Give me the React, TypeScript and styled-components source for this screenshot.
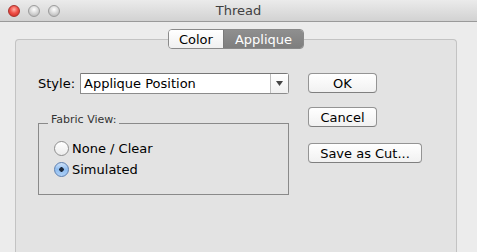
import styled, { createGlobalStyle } from "styled-components";

const GlobalStyle = createGlobalStyle`
  html, body {
    margin: 0;
    padding: 0;
    background: #ececec;
  }
  body {
    font-family: "DejaVu Sans", "Liberation Sans", sans-serif;
    font-size: 12px;
    color: #000;
  }
`;

export default function App() {
  return (
    <>
      <GlobalStyle />
      <Window>
        <TitleBar>
          <Lights>
            <Light $color="red" />
            <Light />
            <Light />
          </Lights>
          <Title>Thread</Title>
        </TitleBar>
        <Body>
          <Segmented>
            <Segment>Color</Segment>
            <Segment $active>Applique</Segment>
          </Segmented>
          <Panel>
            <LeftColumn>
              <FieldRow>
                <FieldLabel>Style:</FieldLabel>
                <Select>
                  <SelectValue>Applique Position</SelectValue>
                  <SelectArrow>
                    <svg width="7" height="5" viewBox="0 0 7 5">
                      <path d="M0 0 H7 L3.5 5 Z" fill="#444" />
                    </svg>
                  </SelectArrow>
                </Select>
              </FieldRow>
              <Group>
                <GroupTitle>Fabric View:</GroupTitle>
                <RadioRow>
                  <Radio />
                  <span>None / Clear</span>
                </RadioRow>
                <RadioRow>
                  <Radio $checked />
                  <span>Simulated</span>
                </RadioRow>
              </Group>
            </LeftColumn>
            <ButtonColumn>
              <Button>OK</Button>
              <Button $gap={14}>Cancel</Button>
              <Button $gap={16} $wide>
                Save as Cut...
              </Button>
            </ButtonColumn>
          </Panel>
        </Body>
      </Window>
    </>
  );
}

const Window = styled.div`
  width: 477px;
  height: 252px;
  overflow: hidden;
  display: flex;
  flex-direction: column;
  background: #ececec;
`;

const TitleBar = styled.div`
  height: 21px;
  flex-shrink: 0;
  display: flex;
  align-items: center;
  position: relative;
  background: linear-gradient(#ebebeb, #d2d2d2);
  border-bottom: 1px solid #9a9a9a;
`;

const Lights = styled.div`
  display: flex;
  gap: 8px;
  padding-left: 8px;
  position: relative;
  z-index: 1;
`;

const Light = styled.div<{ $color?: string }>`
  width: 12px;
  height: 12px;
  border-radius: 50%;
  box-sizing: border-box;
  border: 1px solid ${(p) => (p.$color ? "#a8322c" : "#9c9c9c")};
  background: ${(p) =>
    p.$color
      ? "radial-gradient(circle at 50% 35%, #ffb3a8 0%, #f0524a 45%, #c9231c 100%)"
      : "radial-gradient(circle at 50% 35%, #ffffff 0%, #d6d6d6 50%, #a9a9a9 100%)"};
`;

const Title = styled.div`
  position: absolute;
  left: 0;
  right: 0;
  text-align: center;
  font-size: 13px;
  color: #404040;
`;

const Body = styled.div`
  flex: 1;
  display: flex;
  flex-direction: column;
  padding: 7px 20px 0 15px;
`;

const Segmented = styled.div`
  align-self: center;
  display: flex;
  height: 20px;
  box-sizing: border-box;
  border: 1px solid #8a8a8a;
  border-radius: 4px;
  overflow: hidden;
  margin-bottom: -10px;
  position: relative;
  z-index: 1;
`;

const Segment = styled.div<{ $active?: boolean }>`
  display: flex;
  align-items: center;
  justify-content: center;
  padding: 0 ${(p) => (p.$active ? 11 : 10)}px;
  font-size: 13px;
  color: ${(p) => (p.$active ? "#fff" : "#000")};
  background: ${(p) =>
    p.$active
      ? "linear-gradient(#8f8f8f, #7e7e7e)"
      : "linear-gradient(#ffffff, #f0f0f0)"};
  & + & {
    border-left: 1px solid #7a7a7a;
  }
`;

const Panel = styled.div`
  flex: 1;
  display: flex;
  background: #e3e3e3;
  border: 1px solid #c3c3c3;
  border-bottom: none;
  border-radius: 4px 4px 0 0;
  padding: 33px 0 0 22px;
`;

const LeftColumn = styled.div`
  width: 251px;
  display: flex;
  flex-direction: column;
`;

const FieldRow = styled.div`
  display: flex;
  align-items: center;
  height: 21px;
`;

const FieldLabel = styled.span`
  font-size: 13px;
  width: 42px;
`;

const Select = styled.div`
  width: 209px;
  height: 21px;
  box-sizing: border-box;
  display: flex;
  background: #fff;
  border: 1px solid #8c8c8c;
  border-top-color: #777;
  border-radius: 0 3px 3px 0;
`;

const SelectValue = styled.div`
  flex: 1;
  display: flex;
  align-items: center;
  padding-left: 3px;
  font-size: 13px;
`;

const SelectArrow = styled.div`
  width: 17px;
  display: flex;
  align-items: center;
  justify-content: center;
  border-left: 1px solid #bdbdbd;
  background: linear-gradient(#ffffff, #f0f0f0);
`;

const Group = styled.div`
  position: relative;
  margin-top: 29px;
  height: 72px;
  box-sizing: border-box;
  border: 1px solid #8a8a8a;
  padding: 14px 0 0 15px;
`;

const GroupTitle = styled.span`
  position: absolute;
  top: -11px;
  left: 9px;
  padding: 0 3px;
  background: #e3e3e3;
  font-size: 11px;
  color: #333;
`;

const RadioRow = styled.div`
  display: flex;
  align-items: center;
  gap: 3px;
  height: 21px;
  font-size: 13px;
`;

const Radio = styled.span<{ $checked?: boolean }>`
  width: 15px;
  height: 15px;
  box-sizing: border-box;
  border-radius: 50%;
  border: 1px solid ${(p) => (p.$checked ? "#5c7fb0" : "#8e8e8e")};
  background: ${(p) =>
    p.$checked
      ? "radial-gradient(circle, #1d2a3c 0 2px, transparent 2.5px), linear-gradient(#cfe2f8, #8fbdf0 50%, #aed0f6)"
      : "linear-gradient(#ffffff, #ececec)"};
`;

const ButtonColumn = styled.div`
  display: flex;
  flex-direction: column;
  align-items: flex-start;
  padding-left: 19px;
`;

const Button = styled.div<{ $gap?: number; $wide?: boolean }>`
  margin-top: ${(p) => p.$gap ?? 0}px;
  width: ${(p) => (p.$wide ? 114 : 69)}px;
  height: 20px;
  box-sizing: border-box;
  display: flex;
  align-items: center;
  justify-content: center;
  font-size: 13px;
  background: linear-gradient(#ffffff, #f1f1f1);
  border: 1px solid #949494;
  border-bottom-color: #7f7f7f;
  border-radius: 4px;
`;
